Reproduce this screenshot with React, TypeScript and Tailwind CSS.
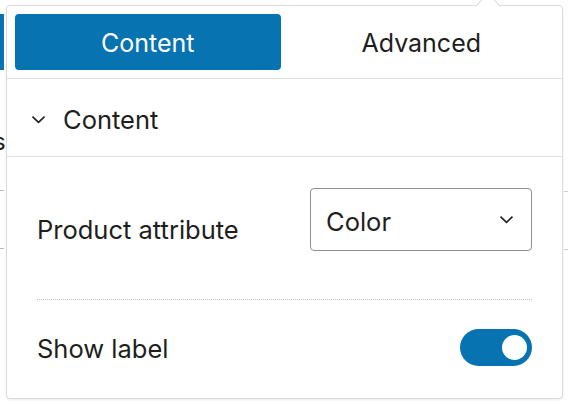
import React from "react";

function Chevron({ className }: { className?: string }) {
  return (
    <svg viewBox="0 0 24 24" className={className} fill="none" stroke="currentColor" strokeWidth={2.2}>
      <path d="M3.5 8l8.5 8 8.5-8" />
    </svg>
  );
}

function App() {
  return (
    <div
      className="relative w-[568px] h-[404px] overflow-hidden bg-white text-[#1e1e1e]"
      style={{ fontFamily: "Inter, 'Noto Sans', sans-serif" }}
    >
      {/* page behind the popover */}
      <div className="absolute left-0 top-[14px] w-[4px] h-[56px] bg-[#0773b1]" />
      <div className="absolute left-[-7px] top-[130px] text-[24px] leading-none">s</div>
      <div className="absolute left-0 top-[190px] w-[4px] h-px bg-[#bbb]" />
      <div className="absolute left-0 top-[248px] w-[4px] h-px bg-[#bbb]" />
      <div className="absolute right-0 top-[191px] w-[4px] h-px bg-[#ccc]" />
      <div className="absolute right-0 top-[249px] w-[4px] h-px bg-[#ccc]" />

      {/* popover */}
      <div className="absolute left-[6px] top-[5px] w-[557px] h-[394px] bg-white border border-[#dcdcde] rounded-[4px] shadow-[0_1px_3px_rgba(0,0,0,0.08)]">
        <div className="absolute top-[-9px] left-[472px] w-[18px] h-[18px] rotate-45 bg-white border-l border-t border-[#dcdcde]" />

        <div className="relative grid grid-cols-2 gap-2 p-2 border-b border-[#e0e0e0]">
          <button className="h-[56px] pt-[3px] rounded-[4px] bg-[#0773b1] text-white text-[25px]">Content</button>
          <button className="h-[56px] pt-[3px] rounded-[4px] text-[25px]">Advanced</button>
        </div>

        <div className="flex items-center gap-[16px] h-[78px] pl-[23px] pt-[4px] border-b border-[#e0e0e0]">
          <Chevron className="w-[17px] h-[17px]" />
          <span className="text-[25.5px] pt-[2px]">Content</span>
        </div>

        <div className="px-[30px] pt-[31px]">
          <div className="flex items-center justify-between">
            <span className="text-[25.5px] pt-[22px]">Product attribute</span>
            <div className="flex items-center justify-between w-[222px] h-[63px] pl-[15px] pr-[16px] border border-[#8c8f94] rounded-[4px]">
              <span className="text-[25.5px] pt-[5px]">Color</span>
              <Chevron className="w-[17px] h-[17px]" />
            </div>
          </div>

          <div className="mt-[48px] border-t border-dotted border-[#c3c4c7]" />

          <div className="flex items-center justify-between h-[37px] mt-[29px]">
            <span className="text-[25.5px] pt-[4px]">Show label</span>
            <div className="flex items-center justify-end w-[72px] h-[37px] pr-[5px] rounded-full bg-[#0773b1]">
              <div className="w-[25px] h-[25px] rounded-full bg-white" />
            </div>
          </div>
        </div>
      </div>
    </div>
  );
}

export default App;
